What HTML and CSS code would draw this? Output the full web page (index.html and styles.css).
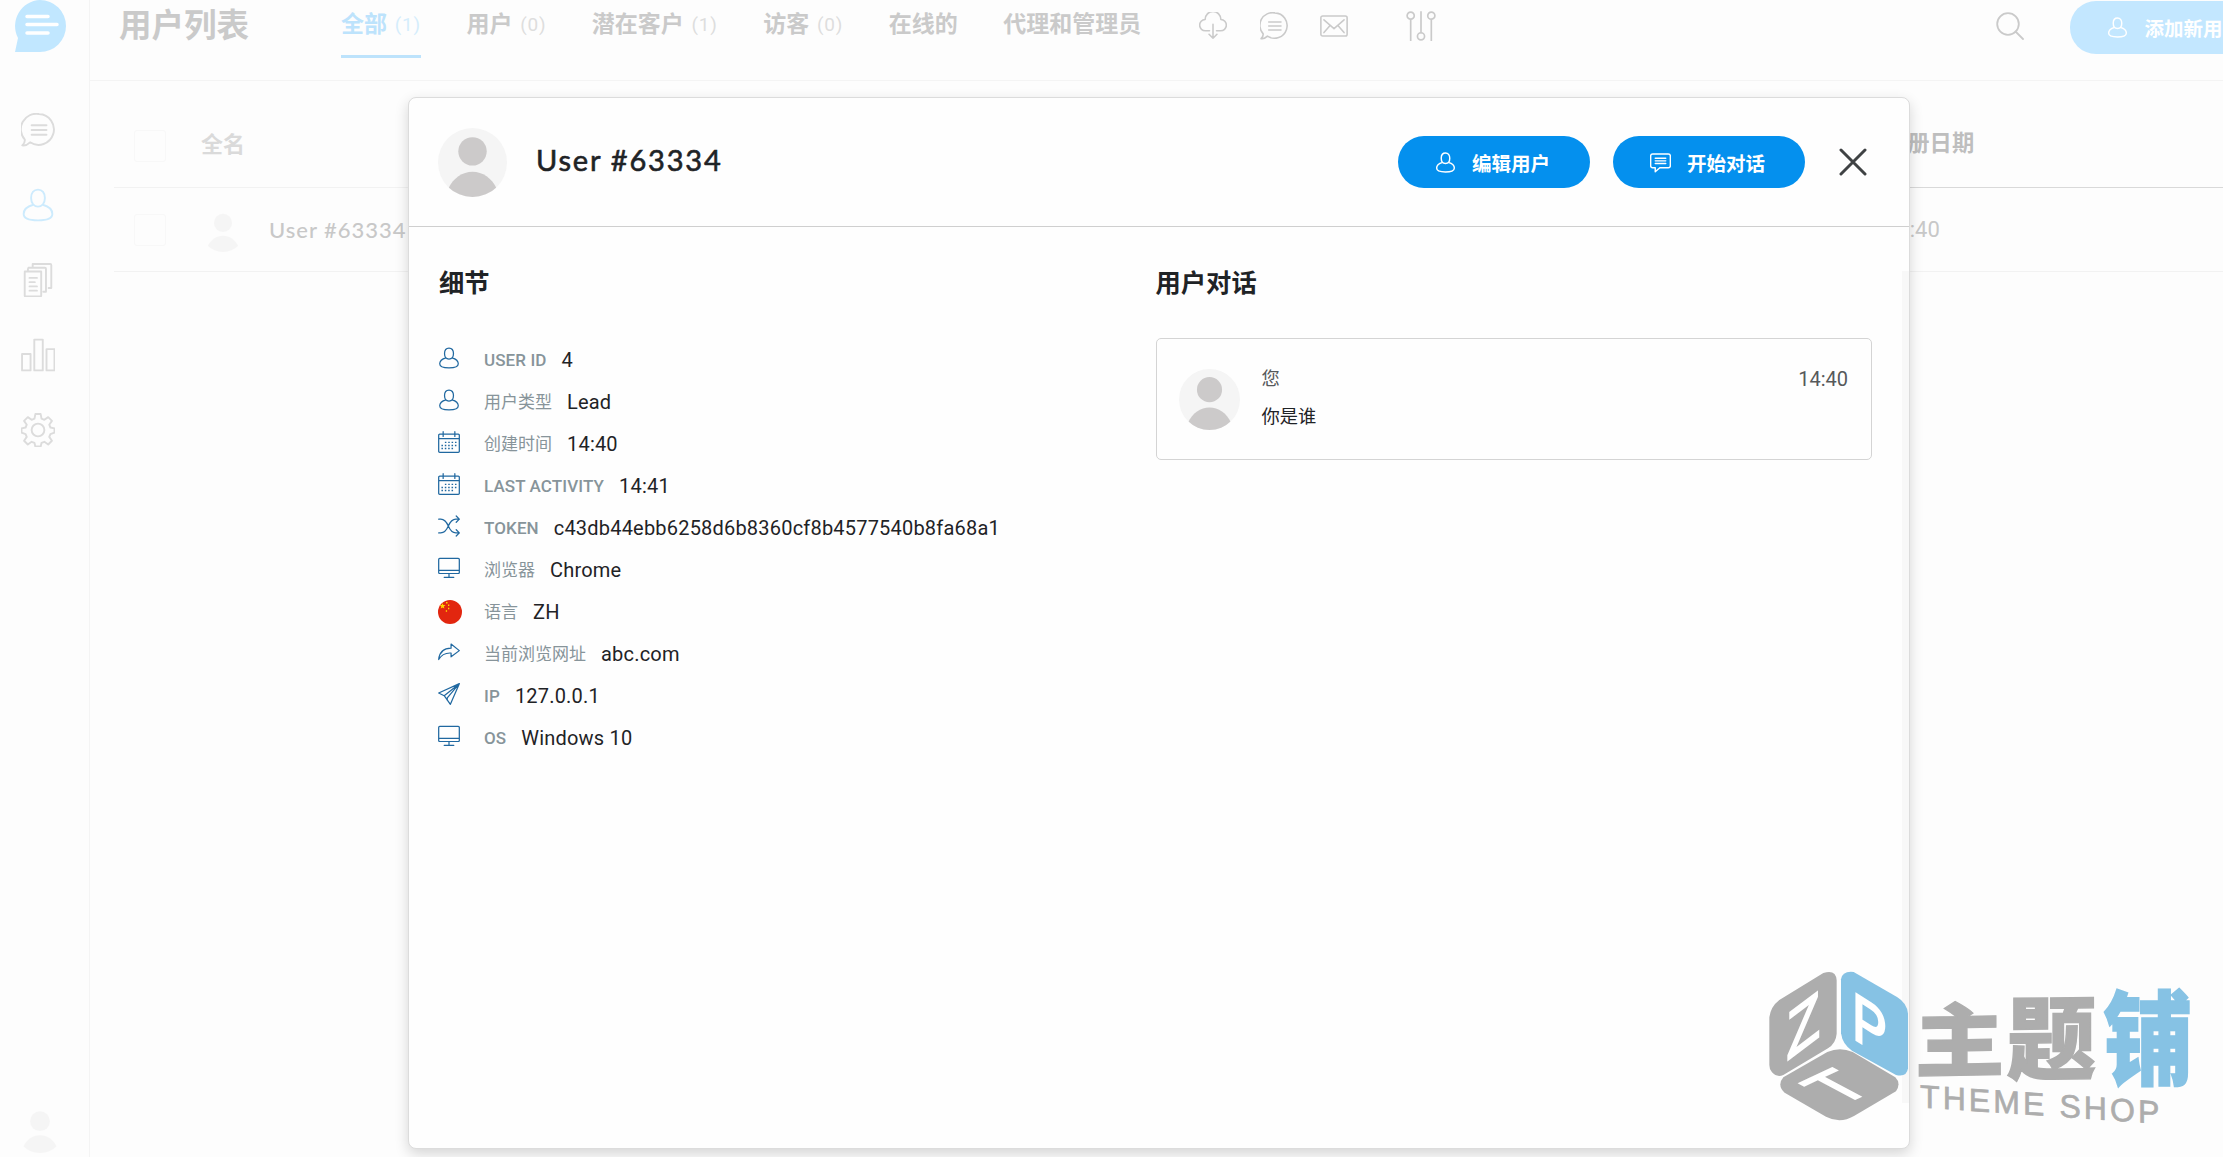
FILE: index.html
```
<!DOCTYPE html>
<html lang="zh-CN">

<head>
  <meta charset="UTF-8" />
  <meta name="viewport" content="width=device-width, initial-scale=1.0" />
  <title>用户列表</title>
  <link rel="stylesheet" href="styles.css">
</head>

<body>
  <!-- Shared icons -->
  <svg class="sprite" aria-hidden="true">
    <symbol id="avatar" viewBox="0 0 68 68">
      <clipPath id="round"><circle cx="34" cy="34" r="34" /></clipPath>
      <circle class="avatar-bg" cx="34" cy="34" r="34" />
      <g clip-path="url(#round)" fill="#cccaca">
        <circle cx="34" cy="23" r="14" />
        <path d="M10 60C15 49 24 43 34 43s19 6 24 17l-11 8H21z" />
      </g>
    </symbol>
    <symbol id="user" viewBox="0 0 32 32">
      <path d="M16 1.500c-4 0-6.500 3.200-6.500 8s2.700 8 6.500 8 6.500-3.200 6.500-8-2.500-8-6.500-8zM11.500 15.800C5.500 17.500 2.500 20 2.500 24.500c0 4 5 6 13.500 6s13.500-2 13.500-6c0-4.500-3-7-9-8.700" />
    </symbol>
    <symbol id="chat" viewBox="0 0 32 32">
      <path d="M17 1a14.500 14.500 0 1 1-8.500 26.600C6 30 3.500 31 1.200 30.500c1.800-1.700 2.600-3.500 2.400-5.500A14.500 14.500 0 0 1 17 1zM10 11.500h14M10 16h14M10 20.500h14" />
    </symbol>
    <symbol id="calendar" viewBox="0 0 32 32">
      <path d="M2.500 4.500h27a1.500 1.500 0 0 1 1.500 1.500v23.500a1.500 1.500 0 0 1-1.500 1.500h-27A1.500 1.500 0 0 1 1 29.500V6a1.500 1.500 0 0 1 1.500-1.500zM1 11h30M7.500 1v7M24.500 1v7" />
      <path d="M10 16.500h17M5 21h22M5 25.500h17" stroke-width="2" stroke-linecap="butt" stroke-dasharray="2.200 2.700" />
    </symbol>
    <symbol id="desktop" viewBox="0 0 32 32">
      <path d="M2.500 2h27A1.500 1.500 0 0 1 31 3.500v19a1.500 1.500 0 0 1-1.500 1.500h-27A1.500 1.500 0 0 1 1 22.500v-19A1.500 1.500 0 0 1 2.500 2zM1 19.500h30M16 24v5M9 29.500h14" />
    </symbol>
  </svg>

  <div class="admin">
    <aside class="sidebar">
      <svg class="logo" viewBox="0 0 52 52">
        <path class="logo-shape" d="M26 0a26 26 0 0 1 0 52H1l3-14A26 26 0 0 1 26 0z" />
        <path class="logo-lines" d="M13 16.500h21M13 24.500h30M13 33h21" />
      </svg>
      <nav class="sidebar-nav">
        <a><svg class="icon"><use href="#chat" /></svg></a>
        <a class="active"><svg class="icon"><use href="#user" /></svg></a>
        <a><svg class="icon" viewBox="0 0 32 32"><path d="M3.500 8h15.500v22.500a1 1 0 0 1-1 1H4.500a1 1 0 0 1-1-1V9a1 1 0 0 1 1-1H18a1 1 0 0 1 1 1M7 4.500h15.500a1 1 0 0 1 1 1V27h-2.500M6.500 8V5.500M11 1h16.500a1 1 0 0 1 1 1v21.500h-2.500M11 4V1M8 14h7M8 18h5M8 22h7M8 26h7" /></svg></a>
        <a><svg class="icon" viewBox="0 0 32 32"><path d="M1 15h8v15.500H1zM12.500 1.500h8v29h-8zM24 10.500h7.500v20H24z" /></svg></a>
        <a><svg class="icon" viewBox="0 0 32 32"><circle cx="16" cy="16" r="6" /><path d="M13.500 1h5l.8 4.300 2.700 1.100 3.600-2.500 3.500 3.500-2.500 3.600 1.100 2.700 3.800.8v4l-3.800 1.300-1.100 2.700 2.500 3.600-3.500 3.500-3.600-2.500-2.700 1.100-.8 3.300h-5l-.8-3.300-2.700-1.100-3.600 2.500-3.500-3.500 2.500-3.600-1.100-2.700L.5 18.500v-4l3.800-.8 1.100-2.700-2.500-3.600 3.500-3.500L10 6.400l2.700-1.100z" /></svg></a>
      </nav>
      <svg class="account"><use href="#avatar" /></svg>
    </aside>

    <main class="users">
      <header class="top-bar">
        <h1>用户列表</h1>
        <nav class="tabs">
          <a class="active">全部 <span>(1)</span></a>
          <a>用户 <span>(0)</span></a>
          <a>潜在客户 <span>(1)</span></a>
          <a>访客 <span>(0)</span></a>
          <a>在线的</a>
          <a>代理和管理员</a>
        </nav>
        <div class="tools">
          <svg class="icon" viewBox="0 0 32 32"><path d="M12 21.500H7.500a6.500 6.500 0 0 1-.5-13 9 9 0 0 1 18 0 6.500 6.500 0 0 1-.5 13H20M16 14v16M11.500 25.500L16 30l4.500-4.500" /></svg>
          <svg class="icon"><use href="#chat" /></svg>
          <svg class="icon" viewBox="0 0 32 32"><path d="M3 4.500h26a2 2 0 0 1 2 2v19a2 2 0 0 1-2 2H3a2 2 0 0 1-2-2v-19a2 2 0 0 1 2-2zM4.500 9L16 19 27.500 9M4.500 23.500l7-8M27.500 23.500l-7-8" /></svg>
          <svg class="icon filter" viewBox="0 0 32 32"><circle cx="5" cy="5" r="3.800" /><circle cx="16" cy="27" r="3.800" /><circle cx="27" cy="5" r="3.800" /><path d="M5 9v22.500M16 1v22M27 9v22.500" /></svg>
        </div>
        <svg class="icon search" viewBox="0 0 28 28"><circle cx="12" cy="12" r="10.800" /><path d="M19.500 19.500L27 27" /></svg>
        <a class="btn new-user"><svg class="icon"><use href="#user" /></svg>添加新用户</a>
      </header>

      <div class="table">
        <div class="row head">
          <i class="checkbox"></i>
          <div class="name">全名</div>
          <div class="date">注册日期</div>
        </div>
        <div class="row">
          <i class="checkbox"></i>
          <div class="name"><svg class="avatar"><use href="#avatar" /></svg><span class="latin">User #63334</span></div>
          <div class="date">14:40</div>
        </div>
      </div>
    </main>
  </div>

  <!-- Profile box -->
  <section class="profile-box">
    <header class="profile-header">
      <svg class="avatar"><use href="#avatar" /></svg>
      <h2 class="latin">User #63334</h2>
      <a class="btn"><svg class="icon"><use href="#user" /></svg>编辑用户</a>
      <a class="btn start"><svg class="icon" viewBox="0 0 32 32"><path d="M4 3h24a3 3 0 0 1 3 3v15a3 3 0 0 1-3 3H15l-7 6v-6H4a3 3 0 0 1-3-3V6a3 3 0 0 1 3-3zM8 9.500h16M8 13.500h16M8 17.500h16" /></svg>开始对话</a>
      <svg class="close" viewBox="0 0 28 28"><path d="M2 2l24 24M26 2L2 26" /></svg>
    </header>

    <div class="profile-body">
      <div class="details">
        <h3>细节</h3>
        <ul>
          <li><svg class="icon"><use href="#user" /></svg><span>USER ID</span><label>4</label></li>
          <li><svg class="icon"><use href="#user" /></svg><span class="zh">用户类型</span><label>Lead</label></li>
          <li><svg class="icon"><use href="#calendar" /></svg><span class="zh">创建时间</span><label>14:40</label></li>
          <li><svg class="icon"><use href="#calendar" /></svg><span>LAST ACTIVITY</span><label>14:41</label></li>
          <li><svg class="icon" viewBox="0 0 32 32"><path d="M1 6h3c5 0 8 3 11 10s7 10 11 10h5M1 26h3c5 0 8-3 11-10S22 6 26 6h5M26.500 1.500L31 6l-4.500 4.500M26.500 21.500L31 26l-4.500 4.500" /></svg><span>TOKEN</span><label>c43db44ebb6258d6b8360cf8b4577540b8fa68a1</label></li>
          <li><svg class="icon"><use href="#desktop" /></svg><span class="zh">浏览器</span><label>Chrome</label></li>
          <li><svg class="flag" viewBox="0 0 24 24"><circle cx="12" cy="12" r="12" fill="#e2260f" /><path d="M4.500 3l.8 2 2.200.1-1.700 1.400.6 2.100-1.900-1.200-1.800 1.200.6-2.100L1.600 5.100l2.200-.1zM8 2h1.500v1.500H8zM10 4.500h1.300V6H10zM10 7.800h1.300v1.500H10zM7.800 10.200h1.300v1.500H7.800z" fill="#ffd500" /></svg><span class="zh">语言</span><label>ZH</label></li>
          <li><svg class="icon" viewBox="0 0 32 32"><path d="M19 4.500L31 14 19 23v-5.500C11 17 5 20 1 27 2 17 8 10.500 19 10.500z" /></svg><span class="zh">当前浏览网址</span><label>abc.com</label></li>
          <li><svg class="icon" viewBox="0 0 32 32"><path d="M31 1L1 14.500l8 4L18 31zM31 1L9 18.500M31 1L13.500 21.500V25" /></svg><span>IP</span><label>127.0.0.1</label></li>
          <li><svg class="icon"><use href="#desktop" /></svg><span>OS</span><label>Windows 10</label></li>
        </ul>
      </div>

      <div class="conversations">
        <h3>用户对话</h3>
        <div class="card">
          <svg class="avatar"><use href="#avatar" /></svg>
          <div class="message">
            <div class="from">您</div>
            <div>你是谁</div>
          </div>
          <time>14:40</time>
        </div>
      </div>
    </div>
    <i class="scroll-area"></i>
  </section>

  <!-- Theme shop watermark -->
  <svg class="watermark" viewBox="0 0 1449 651">
    <g fill="#adadad">
      <path d="M250 99q38-12 40 22v160q-2 28-26 44l-134 80q-20 8-34-8-8-8-8-22V232q4-32 30-52z" />
      <path d="M262 336q38-16 76 0l128 76q18 18 2 42l-126 74q-42 24-84 2L134 458q-24-22-4-46z" />
    </g>
    <path d="M303 118q4-26 38-22l130 75q30 18 33 50v164q-4 28-36 20L336 332q-28-18-33-52z" fill="#86c2e4" />
    <g class="cube-letters">
      <text transform="matrix(.82 -.62 0 1 140 362)" font-size="198">Z</text>
      <text transform="matrix(.78 .5 0 1 337 292)" font-size="200">P</text>
      <text transform="matrix(1.8 -.85 1.88 1 300 499)" font-size="97" stroke-width="3">T</text>
    </g>
    <g class="shop-name">
      <text transform="matrix(2.850 -.05 0 2.550 525 393)">主</text>
      <text transform="matrix(2.850 -.03 0 2.900 800 398)">题</text>
      <text class="blue" transform="matrix(2.850 0 0 3.250 1090 411)">铺</text>
    </g>
    <text class="shop-sub" transform="matrix(1 .068 0 1 540 502)" textLength="718">THEME SHOP</text>
  </svg>
</body>

</html>
```
FILE: styles.css
```
* {
  box-sizing: border-box;
}

body {
  --avatar-bg: #f5f5f5;
  margin: 0;
  height: 1157px;
  overflow: hidden;
  position: relative;
  background: #fdfdfd;
  color: #1f2326;
  font-family: Roboto, "Noto Sans CJK SC", sans-serif;
  font-size: 20px;
}

h1,
h2,
h3,
ul {
  margin: 0;
  padding: 0;
}

.sprite {
  position: absolute;
  width: 0;
  height: 0;
}

.icon {
  display: block;
  flex-shrink: 0;
  fill: none;
  stroke: currentColor;
  stroke-width: 1.8;
  stroke-linecap: round;
  stroke-linejoin: round;
}

.avatar-bg {
  fill: var(--avatar-bg);
}

.latin {
  font-family: Lato, sans-serif;
}

.admin {
  --avatar-bg: none;
  display: flex;
  height: 100%;
}

/* Sidebar */

.sidebar {
  display: flex;
  flex-direction: column;
  align-items: center;
  flex-shrink: 0;
  width: 90px;
  padding-right: 13px;
  border-right: 1px solid #f4f4f4;
}

.logo {
  width: 52px;
  height: 52px;
  margin-left: 3px;
}

.logo-shape {
  fill: #c1e7ff;
}

.logo-lines {
  fill: none;
  stroke: #fff;
  stroke-width: 3.5;
  stroke-linecap: round;
}

.sidebar-nav {
  flex: 1;
  margin-top: 40px;
  color: #dcdcdc;
}

.sidebar-nav a {
  display: flex;
  align-items: center;
  height: 75px;
}

.sidebar-nav .active {
  color: #cdebfd;
}

.sidebar-nav .icon {
  width: 34px;
  height: 34px;
}

.account {
  width: 48px;
  height: 48px;
  margin: 0 0 4px 3px;
  opacity: 0.14;
}

/* Top bar */

.users {
  flex: 1;
  min-width: 0;
  overflow: hidden;
}

.top-bar {
  display: flex;
  align-items: center;
  height: 81px;
  padding: 0 0 28px 29px;
  border-bottom: 1px solid #f4f4f4;
  color: #cacaca;
  white-space: nowrap;
}

.top-bar h1 {
  flex-shrink: 0;
  width: 222px;
  font-size: 32.5px;
  font-weight: 700;
  line-height: 50px;
}

.tabs {
  display: flex;
  flex-shrink: 0;
  align-self: flex-start;
  gap: 45.5px;
  width: 858px;
  font-size: 23px;
  font-weight: 700;
}

.tabs a {
  height: 58px;
  line-height: 50px;
}

.tabs span {
  margin-left: 2px;
  color: #dedede;
  font-size: 19px;
  font-weight: 400;
  letter-spacing: 0.8px;
  vertical-align: 1px;
}

.tabs .active {
  color: #bde3fc;
  border-bottom: 3px solid #bde3fc;
}

.tabs .active span {
  color: #d5edfc;
}

.tools {
  display: flex;
  flex-shrink: 0;
  align-items: center;
  gap: 32.5px;
}

.tools .icon {
  width: 28px;
  height: 28px;
}

.tools .filter {
  width: 30px;
  height: 30px;
  margin-left: 25px;
}

.search {
  width: 28px;
  height: 28px;
  margin-left: 560px;
}

.btn {
  display: flex;
  flex-shrink: 0;
  align-items: center;
  gap: 16px;
  height: 52px;
  padding: 0 37px;
  border-radius: 26px;
  background: #0490ee;
  color: #fff;
  font-size: 19.5px;
  font-weight: 600;
}

.btn .icon {
  width: 21px;
  height: 21px;
  stroke-width: 2.2;
}

.new-user {
  height: 53px;
  margin: 2px 0 0 46px;
  gap: 17px;
  background: #c3e7ff;
}

/* Users table */

.table {
  margin-left: 24px;
}

.row {
  display: flex;
  align-items: center;
  height: 84px;
  padding-left: 20px;
  border-bottom: 1px solid #f2f2f2;
  color: #c8c8c8;
  font-size: 22px;
}

.row.head {
  height: 107px;
  padding-top: 22px;
  border-bottom: 0;
  box-shadow: inset 0 -1px #f2f2f2;
  color: #dadada;
  font-weight: 700;
}

.checkbox {
  width: 32px;
  height: 32px;
  margin-right: 35px;
  border: 1px solid #f8f8f8;
  border-radius: 3px;
}

.row .name {
  display: flex;
  align-items: center;
  flex: 1;
}

.head .name {
  padding-bottom: 8px;
}

.row .avatar {
  width: 44px;
  height: 44px;
  margin-right: 24px;
  opacity: 0.14;
}

.row .latin {
  font-weight: 500;
  letter-spacing: 1px;
}

.row .date {
  width: 338px;
}

.head .date {
  height: 85px;
  border-bottom: 1px solid #d9d9d9;
  color: #bebebe;
  font-size: 22.3px;
  line-height: 81px;
}

/* Profile box */

.profile-box {
  position: absolute;
  top: 97px;
  left: 408px;
  width: 1502px;
  height: 1052px;
  border: 1px solid #dcdcdc;
  border-radius: 8px;
  background: #fefefe;
  box-shadow: 0 5px 14px rgba(0, 0, 0, 0.16);
}

.profile-header {
  display: flex;
  align-items: center;
  height: 129px;
  padding: 0 42px 0 29px;
  border-bottom: 1px solid #cfcfcf;
}

.profile-header .avatar {
  width: 69px;
  height: 69px;
}

.profile-header h2 {
  margin: -6px auto 0 29px;
  font-size: 29px;
  font-weight: 400;
  letter-spacing: 1.8px;
  -webkit-text-stroke: 0.6px currentColor;
}

.profile-header .btn {
  width: 192px;
}

.profile-header .start {
  margin-left: 23px;
}

.close {
  width: 28px;
  height: 28px;
  margin-left: 34px;
  fill: none;
  stroke: #3f4244;
  stroke-width: 3;
  stroke-linecap: round;
}

.profile-body {
  display: flex;
  padding: 39px 37px 0 30px;
}

.profile-body h3 {
  height: 72px;
  font-size: 25.3px;
  font-weight: 600;
  line-height: 36px;
}

.details,
.conversations {
  flex: 1;
}

.details li {
  display: flex;
  align-items: center;
  height: 42.05px;
}

.details .icon,
.details .flag {
  width: 22px;
  height: 22px;
  margin: -2px 24px 0 -1px;
  color: #2068a0;
}

.details .flag {
  width: 24px;
  height: 24px;
  margin: 1px 22px 0 -1px;
}

.details span {
  margin: 2px 15px 0 0;
  color: #87949a;
  font-size: 17px;
  font-weight: 500;
  letter-spacing: 0.1px;
}

.details .zh {
  margin-top: -1px;
  font-weight: 400;
  letter-spacing: 0;
}

.details label {
  margin-top: 2px;
  letter-spacing: 0.2px;
}

.card {
  display: flex;
  height: 122px;
  padding: 30px 23px 30px 22px;
  border: 1px solid #d4d4d4;
  border-radius: 5px;
}

.card .avatar {
  width: 61px;
  height: 61px;
  margin-right: 22px;
}

.message {
  flex: 1;
  font-size: 18.3px;
  line-height: 38px;
  margin-top: -9px;
}

.card .from,
.card time {
  color: #56595b;
}

.card time {
  line-height: 21px;
}

.scroll-area {
  position: absolute;
  top: 173px;
  right: 0;
  width: 7px;
  height: 832px;
  background: #f8f8f8;
}

/* Watermark */

.watermark {
  position: absolute;
  top: 940px;
  left: 1740px;
  width: 483px;
  height: 217px;
}

.cube-letters {
  fill: #fff;
  stroke: #fff;
  stroke-width: 8;
  font-family: "Liberation Sans", sans-serif;
}

.shop-name {
  fill: #adadad;
  stroke: #adadad;
  stroke-width: 1.5;
  font-family: "Noto Sans CJK SC", sans-serif;
  font-size: 94px;
  font-weight: 900;
}

.shop-name .blue {
  fill: #86c2e4;
  stroke: #86c2e4;
}

.shop-sub {
  fill: #adadad;
  stroke: #adadad;
  stroke-width: 2;
  font-family: "Liberation Sans", sans-serif;
  font-size: 96px;
}
```
